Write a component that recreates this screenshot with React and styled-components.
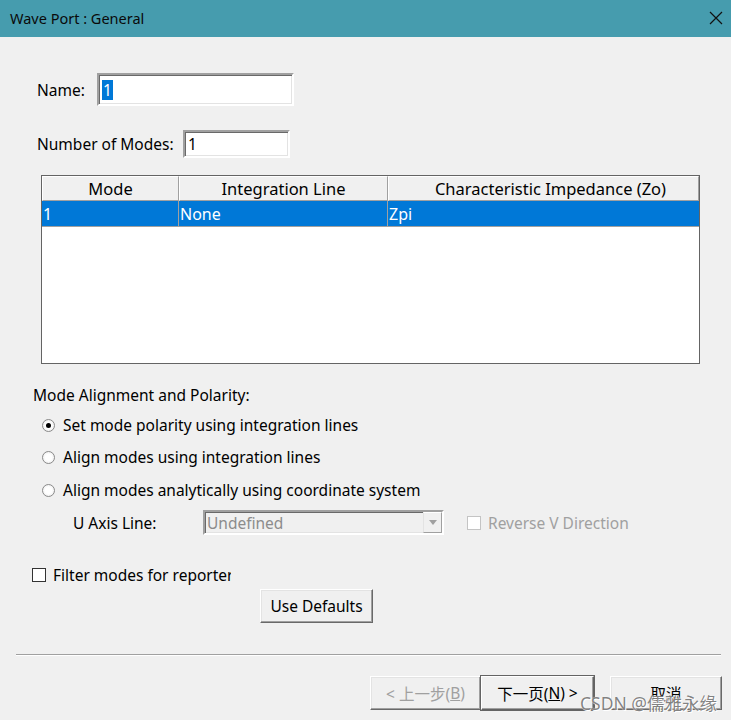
import React from "react";
import styled, { createGlobalStyle, css } from "styled-components";

const Global = createGlobalStyle`
  html, body { margin: 0; padding: 0; background: #f0f0f0; }
  body { font-family: "Noto Sans", "Noto Sans CJK SC", sans-serif; color: #000; }
  * { box-sizing: border-box; }
`;

const Dialog = styled.div`
  position: relative;
  width: 731px;
  height: 720px;
  background: #f0f0f0;
  overflow: hidden;
  display: flex;
  flex-direction: column;
`;

const TitleBar = styled.div`
  height: 37px;
  flex: none;
  background: #469cae;
  display: flex;
  align-items: center;
  justify-content: space-between;
  padding: 0 8px 2px 10px;
  font-size: 14.5px;
  color: #0a0a0a;
`;

const TitleText = styled.span``;

const CloseIcon = styled.svg`
  width: 14px;
  height: 14px;
`;

const Body = styled.div`
  display: flex;
  flex-direction: column;
  font-size: 15.5px;
`;

const Row = styled.div`
  display: flex;
  align-items: center;
  height: ${(p) => p.$h}px;
  margin-top: ${(p) => p.$mt || 0}px;
  padding-left: ${(p) => p.$pl || 0}px;
`;

const Label = styled.span`
  width: ${(p) => (p.$w ? `${p.$w}px` : "auto")};
  flex: none;
  white-space: nowrap;
`;

const sunken = css`
  border-style: solid;
  border-width: 2px;
  border-color: #a0a0a0 #ffffff #ffffff #a0a0a0;
  box-shadow: inset 1px 1px 0 #696969, inset -1px -1px 0 #e3e3e3;
`;

const TextBox = styled.div`
  ${sunken};
  width: ${(p) => p.$w}px;
  height: 100%;
  background: #fff;
  display: flex;
  align-items: center;
  padding-left: 3px;
`;

const Selected = styled.span`
  background: #0078d7;
  color: #fff;
  line-height: 20px;
  padding: 0 1px;
`;

const Table = styled.div`
  margin: 17px 0 0 41px;
  width: 659px;
  height: 189px;
  border: 1px solid #646464;
  background: #fff;
  display: flex;
  flex-direction: column;
  font-size: 16px;
`;

const Cols = "137px 209px 1fr";

const HeaderRow = styled.div`
  display: grid;
  grid-template-columns: ${Cols};
  height: 25px;
  background: #f0f0f0;
  font-size: 16.5px;
`;

const HeaderCell = styled.div`
  display: flex;
  align-items: center;
  justify-content: center;
  padding-left: ${(p) => p.$pl || 0}px;
  border-top: 1px solid #fff;
  border-left: 1px solid #fff;
  border-right: 1px solid #a0a0a0;
  border-bottom: 1px solid #a0a0a0;
`;

const DataRow = styled.div`
  display: grid;
  grid-template-columns: ${Cols};
  height: 26px;
  background: ${(p) => (p.$sel ? "#0078d7" : "#fff")};
  color: ${(p) => (p.$sel ? "#fff" : "#000")};
`;

const DataCell = styled.div`
  display: flex;
  align-items: center;
  padding-left: 1px;
  border-right: 1px solid #a0a0a0;
  border-bottom: 1px solid #a0a0a0;
  &:last-child { border-right: none; }
`;

const RadioCircle = styled.span`
  width: 13px;
  height: 13px;
  border-radius: 50%;
  border: 1px solid #8a8a8a;
  background: radial-gradient(circle at 50% 50%, #ffffff 40%, #e6e6e6 100%);
  display: flex;
  align-items: center;
  justify-content: center;
  margin-right: 8px;
  flex: none;
  &::after {
    content: "";
    width: 5px;
    height: 5px;
    border-radius: 50%;
    background: ${(p) => (p.$on ? "#000" : "transparent")};
  }
`;

const Check = styled.span`
  width: 14px;
  height: 14px;
  flex: none;
  background: #fff;
  border: 1px solid ${(p) => (p.$dis ? "#c4c4c4" : "#333")};
  margin-left: ${(p) => p.$ml || 0}px;
  margin-right: 7px;
`;

const Combo = styled.div`
  ${sunken};
  width: 241px;
  height: 25px;
  background: #f0f0f0;
  display: flex;
  align-items: center;
  justify-content: space-between;
  padding-left: 2px;
  color: #8c8c8c;
`;

const ComboBtn = styled.span`
  width: 19px;
  height: 100%;
  border-left: 1px solid #e3e3e3;
  border-top: 1px solid #fff;
  border-right: 1px solid #a0a0a0;
  border-bottom: 1px solid #a0a0a0;
  display: flex;
  align-items: center;
  justify-content: center;
  &::after {
    content: "";
    border-left: 4px solid transparent;
    border-right: 4px solid transparent;
    border-top: 5px solid #a0a0a0;
  }
`;

const Muted = styled.span`
  color: #a0a0a0;
  white-space: nowrap;
`;

const Clip = styled.span`
  display: inline-block;
  width: 178px;
  overflow: hidden;
  white-space: nowrap;
`;

const Button = styled.div`
  width: ${(p) => p.$w}px;
  height: 34px;
  margin-left: ${(p) => p.$ml || 0}px;
  display: flex;
  align-items: center;
  justify-content: center;
  background: #f0f0f0;
  border-style: solid;
  border-width: 1px;
  border-color: #ffffff #696969 #696969 #ffffff;
  box-shadow: inset -1px -1px 0 #a0a0a0, inset 1px 1px 0 #e3e3e3;
  color: ${(p) => (p.$dis ? "#a0a0a0" : "#000")};
  font-size: 15.5px;
  white-space: nowrap;
  ${(p) =>
    p.$def &&
    css`
      border-color: #ffffff #646464 #646464 #ffffff;
      box-shadow: inset -1px -1px 0 #a0a0a0, 0 0 0 1px #646464;
    `}
`;

const U = styled.span`
  text-decoration: underline;
`;

const Separator = styled.div`
  margin: 31px 10px 0 16px;
  height: 2px;
  border-top: 1px solid #a0a0a0;
  border-bottom: 1px solid #ffffff;
`;

const Footer = styled.div`
  display: flex;
  padding-left: 370px;
  margin-top: 20px;
`;

const Watermark = styled.div`
  position: absolute;
  left: 580px;
  top: 690px;
  font-size: 17.5px;
  color: rgba(90, 90, 90, 0.75);
  text-shadow: 0 0 1px #fff, 1px 1px 0 #fff;
  white-space: nowrap;
  pointer-events: none;
`;

export default function App() {
  return (
    <Dialog>
      <Global />
      <TitleBar>
        <TitleText>Wave Port : General</TitleText>
        <CloseIcon viewBox="0 0 14 14">
          <path d="M1 1 L13 13 M13 1 L1 13" stroke="#111" strokeWidth="1.2" fill="none" />
        </CloseIcon>
      </TitleBar>
      <Body>
        <Row $h={33} $mt={36} $pl={37}>
          <Label $w={60}>Name:</Label>
          <TextBox $w={197}>
            <Selected>1</Selected>
          </TextBox>
        </Row>
        <Row $h={28} $mt={24} $pl={37}>
          <Label $w={146}>Number of Modes:</Label>
          <TextBox $w={107}>1</TextBox>
        </Row>
        <Table>
          <HeaderRow>
            <HeaderCell>Mode</HeaderCell>
            <HeaderCell>Integration Line</HeaderCell>
            <HeaderCell $pl={14}>Characteristic Impedance (Zo)</HeaderCell>
          </HeaderRow>
          <DataRow $sel>
            <DataCell>1</DataCell>
            <DataCell>None</DataCell>
            <DataCell>Zpi</DataCell>
          </DataRow>
        </Table>
        <Row $h={20} $mt={21} $pl={33}>
          <Label>Mode Alignment and Polarity:</Label>
        </Row>
        <Row $h={20} $mt={10} $pl={42}>
          <RadioCircle $on />
          <Label>Set mode polarity using integration lines</Label>
        </Row>
        <Row $h={20} $mt={12} $pl={42}>
          <RadioCircle />
          <Label>Align modes using integration lines</Label>
        </Row>
        <Row $h={20} $mt={13} $pl={42}>
          <RadioCircle />
          <Label>Align modes analytically using coordinate system</Label>
        </Row>
        <Row $h={25} $mt={10} $pl={73}>
          <Label $w={130}>U Axis Line:</Label>
          <Combo>
            <span>Undefined</span>
            <ComboBtn />
          </Combo>
          <Check $dis $ml={23} />
          <Muted>Reverse V Direction</Muted>
        </Row>
        <Row $h={20} $mt={30} $pl={32}>
          <Check />
          <Clip>Filter modes for reporter</Clip>
        </Row>
        <Row $h={34} $mt={4} $pl={260}>
          <Button $w={113}>Use Defaults</Button>
        </Row>
        <Separator />
        <Footer>
          <Button $w={111} $dis>
            &lt; 上一步(<U>B</U>)
          </Button>
          <Button $w={113} $def>
            下一页(<U>N</U>) &gt;
          </Button>
          <Button $w={112} $ml={16}>
            取消
          </Button>
        </Footer>
      </Body>
      <Watermark>CSDN @儒雅永缘</Watermark>
    </Dialog>
  );
}
